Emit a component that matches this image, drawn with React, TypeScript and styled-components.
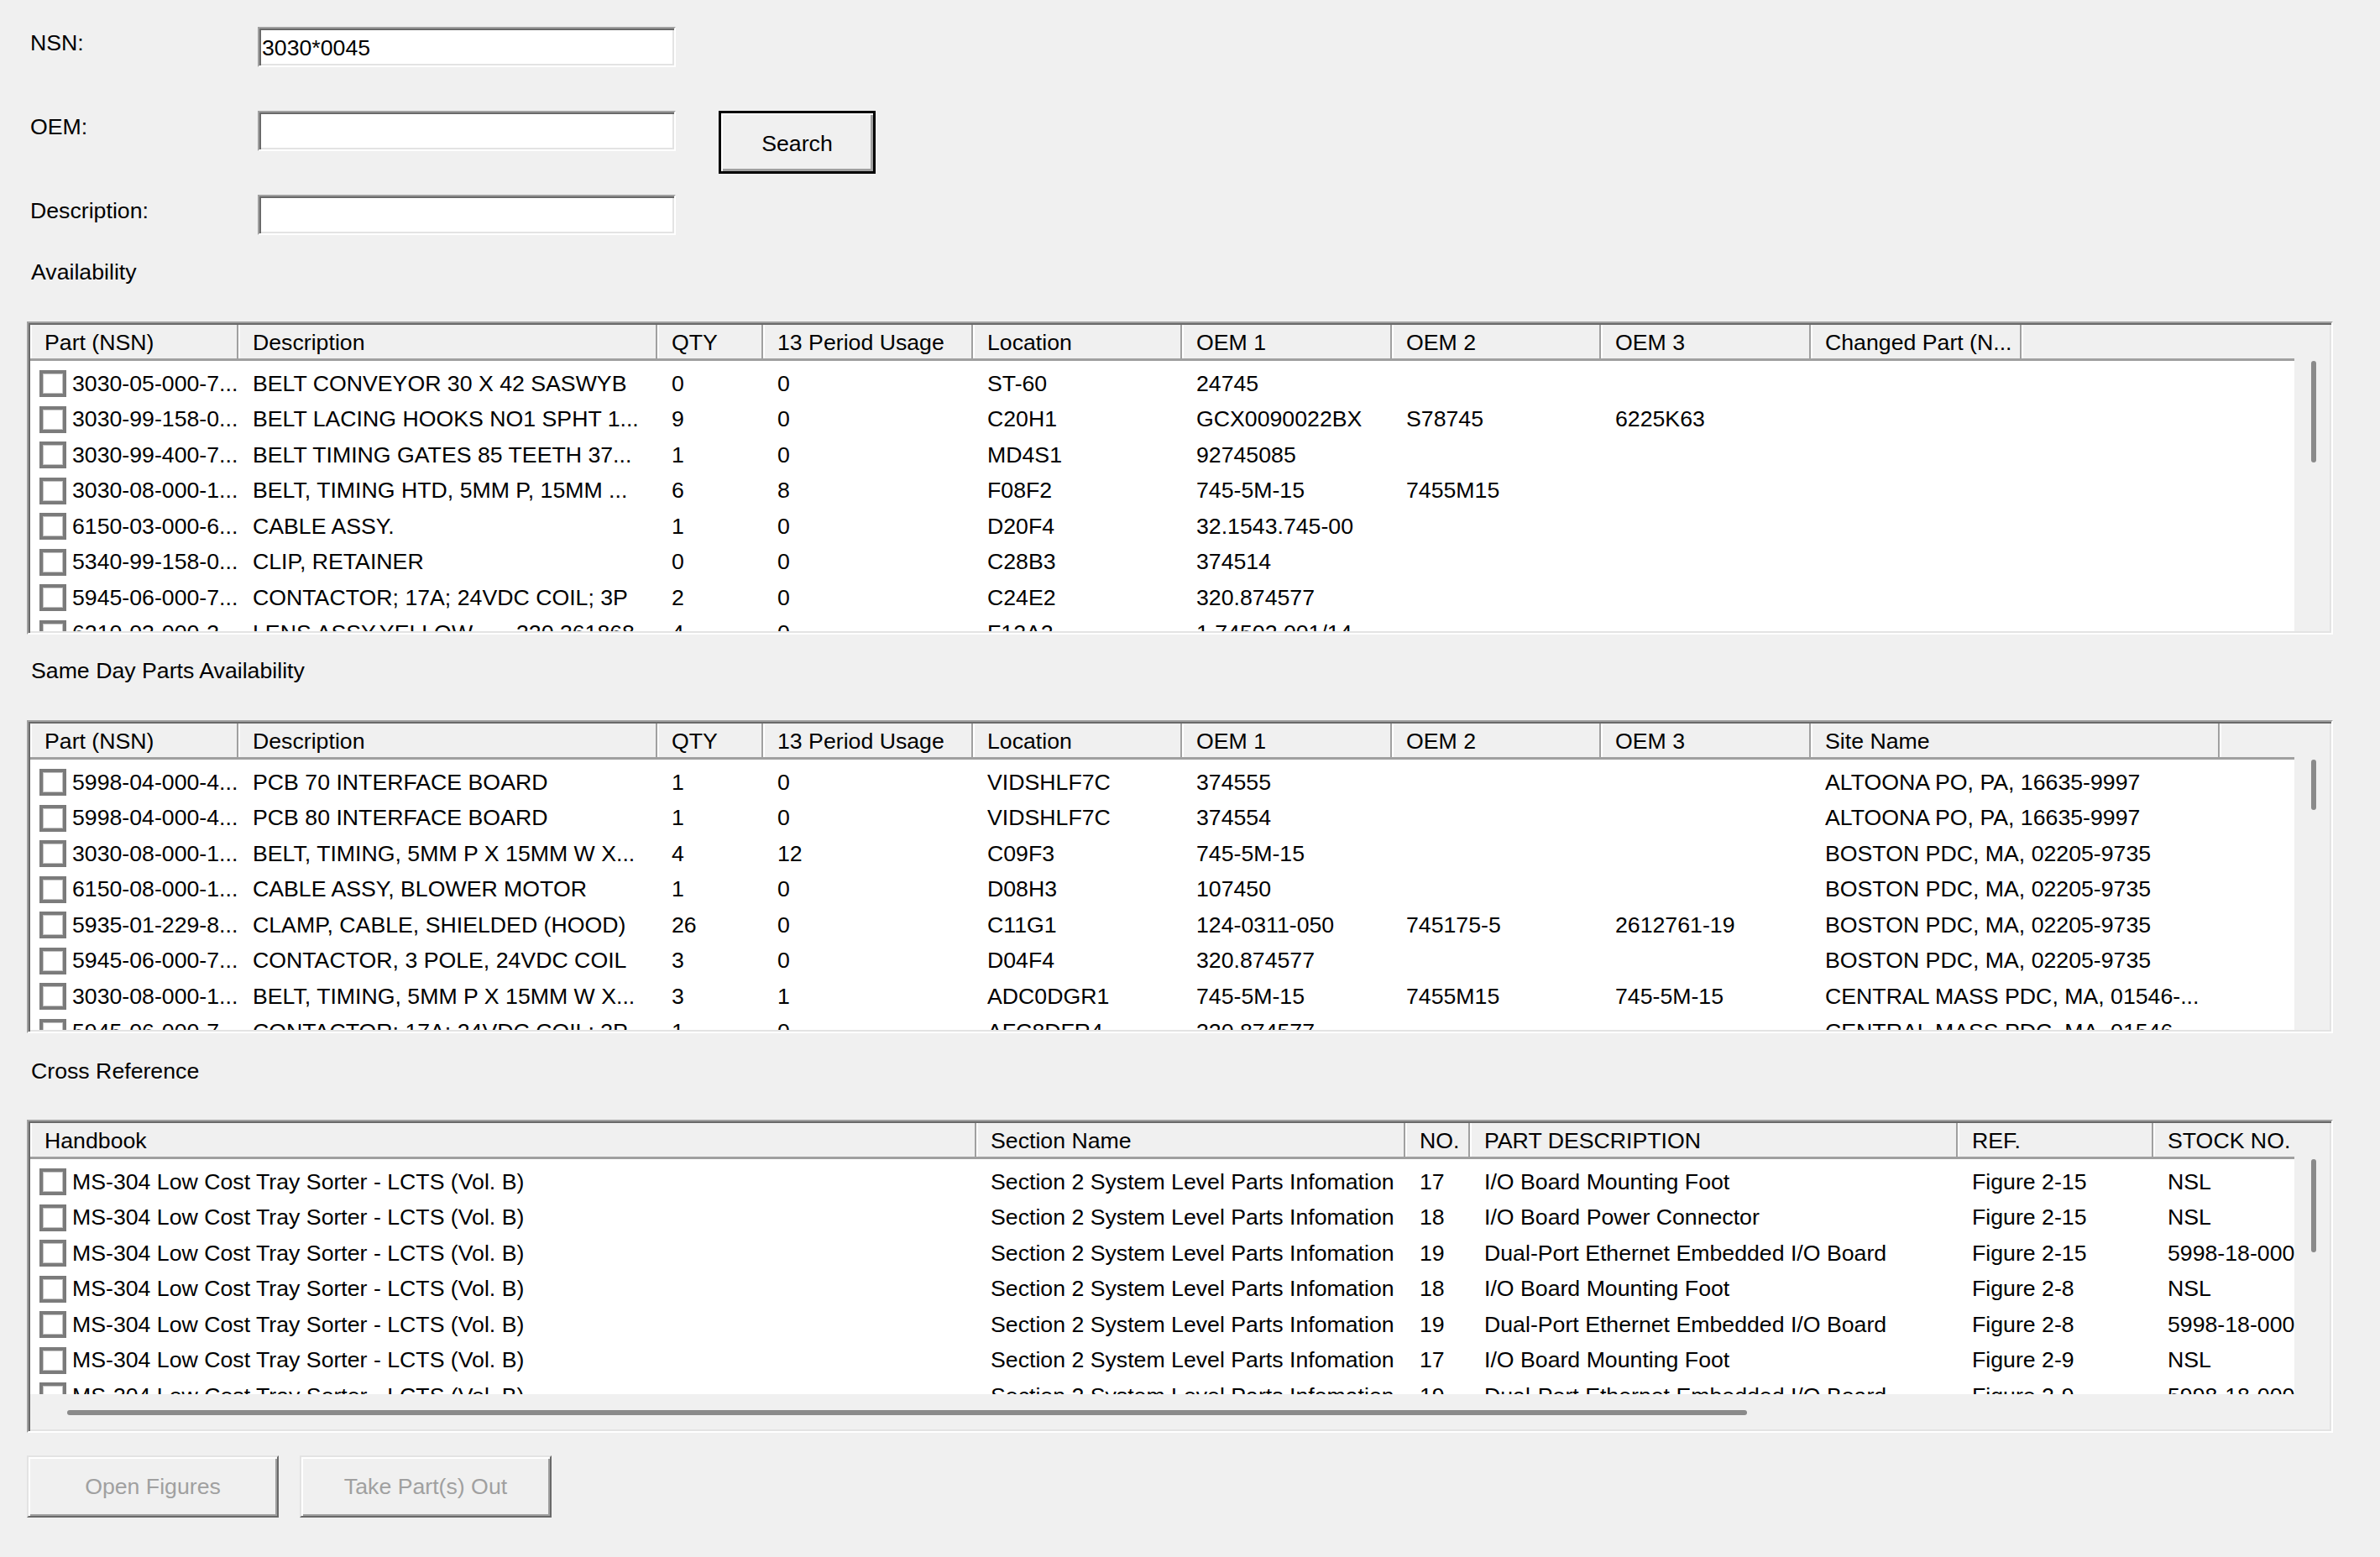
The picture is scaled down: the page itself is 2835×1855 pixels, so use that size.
import React from 'react'
import styled, { createGlobalStyle } from 'styled-components'

const GlobalStyle = createGlobalStyle`
  html, body {
    margin: 0;
    padding: 0;
  }
  body {
    background: #f0f0f0;
    font-family: 'Liberation Sans', Arial, sans-serif;
    font-size: 26.7px;
    color: #000;
  }
`

type Column = { title: string; width: number }

const partColumns: Column[] = [
  { title: 'Part (NSN)', width: 248 },
  { title: 'Description', width: 499 },
  { title: 'QTY', width: 126 },
  { title: '13 Period Usage', width: 250 },
  { title: 'Location', width: 249 },
  { title: 'OEM 1', width: 250 },
  { title: 'OEM 2', width: 249 },
  { title: 'OEM 3', width: 250 },
]

const availabilityColumns: Column[] = [...partColumns, { title: 'Changed Part (N...', width: 251 }]
const sameDayColumns: Column[] = [...partColumns, { title: 'Site Name', width: 487 }]

const crossColumns: Column[] = [
  { title: 'Handbook', width: 1127 },
  { title: 'Section Name', width: 511 },
  { title: 'NO.', width: 77 },
  { title: 'PART DESCRIPTION', width: 581 },
  { title: 'REF.', width: 233 },
  { title: 'STOCK NO.', width: 300 },
]

const availabilityRows = [
  ['3030-05-000-7...', 'BELT CONVEYOR 30 X 42 SASWYB', '0', '0', 'ST-60', '24745'],
  ['3030-99-158-0...', 'BELT LACING HOOKS NO1 SPHT 1...', '9', '0', 'C20H1', 'GCX0090022BX', 'S78745', '6225K63'],
  ['3030-99-400-7...', 'BELT TIMING GATES 85 TEETH 37...', '1', '0', 'MD4S1', '92745085'],
  ['3030-08-000-1...', 'BELT, TIMING HTD, 5MM P, 15MM ...', '6', '8', 'F08F2', '745-5M-15', '7455M15'],
  ['6150-03-000-6...', 'CABLE ASSY.', '1', '0', 'D20F4', '32.1543.745-00'],
  ['5340-99-158-0...', 'CLIP, RETAINER', '0', '0', 'C28B3', '374514'],
  ['5945-06-000-7...', 'CONTACTOR; 17A; 24VDC COIL; 3P', '2', '0', 'C24E2', '320.874577'],
  ['6210-03-000-3...', 'LENS ASSY,YELLOW       320.361868', '4', '0', 'F12A2', '1.74502.001/14'],
]

const sameDayRows = [
  ['5998-04-000-4...', 'PCB 70 INTERFACE BOARD', '1', '0', 'VIDSHLF7C', '374555', '', '', 'ALTOONA PO, PA, 16635-9997'],
  ['5998-04-000-4...', 'PCB 80 INTERFACE BOARD', '1', '0', 'VIDSHLF7C', '374554', '', '', 'ALTOONA PO, PA, 16635-9997'],
  ['3030-08-000-1...', 'BELT, TIMING, 5MM P X 15MM W X...', '4', '12', 'C09F3', '745-5M-15', '', '', 'BOSTON PDC, MA, 02205-9735'],
  ['6150-08-000-1...', 'CABLE ASSY, BLOWER MOTOR', '1', '0', 'D08H3', '107450', '', '', 'BOSTON PDC, MA, 02205-9735'],
  ['5935-01-229-8...', 'CLAMP, CABLE, SHIELDED (HOOD)', '26', '0', 'C11G1', '124-0311-050', '745175-5', '2612761-19', 'BOSTON PDC, MA, 02205-9735'],
  ['5945-06-000-7...', 'CONTACTOR, 3 POLE, 24VDC COIL', '3', '0', 'D04F4', '320.874577', '', '', 'BOSTON PDC, MA, 02205-9735'],
  ['3030-08-000-1...', 'BELT, TIMING, 5MM P X 15MM W X...', '3', '1', 'ADC0DGR1', '745-5M-15', '7455M15', '745-5M-15', 'CENTRAL MASS PDC, MA, 01546-...'],
  ['5945-06-000-7...', 'CONTACTOR; 17A; 24VDC COIL; 3P', '1', '0', 'AFC8DFR4', '320.874577', '', '', 'CENTRAL MASS PDC, MA, 01546-...'],
]

const handbook = 'MS-304 Low Cost Tray Sorter - LCTS (Vol. B)'
const section = 'Section 2 System Level Parts Infomation'

const crossRows = [
  [handbook, section, '17', 'I/O Board Mounting Foot', 'Figure 2-15', 'NSL'],
  [handbook, section, '18', 'I/O Board Power Connector', 'Figure 2-15', 'NSL'],
  [handbook, section, '19', 'Dual-Port Ethernet Embedded I/O Board', 'Figure 2-15', '5998-18-000-'],
  [handbook, section, '18', 'I/O Board Mounting Foot', 'Figure 2-8', 'NSL'],
  [handbook, section, '19', 'Dual-Port Ethernet Embedded I/O Board', 'Figure 2-8', '5998-18-000-'],
  [handbook, section, '17', 'I/O Board Mounting Foot', 'Figure 2-9', 'NSL'],
  [handbook, section, '19', 'Dual-Port Ethernet Embedded I/O Board', 'Figure 2-9', '5998-18-000-'],
]

type ListProps = {
  columns: Column[]
  rows: string[][]
  thumbHeight: number
  hThumb?: { left: number; width: number }
}

const ListTable = ({ columns, rows, thumbHeight, hThumb }: ListProps) => {
  const template = columns.map((c) => `${c.width}px`).join(' ') + ' 1fr'
  return (
    <Frame>
      <ListPane>
        <ListArea>
          <HeaderRow $template={template}>
            {columns.map((c) => (
              <HeaderCell key={c.title}>{c.title}</HeaderCell>
            ))}
            <HeaderFiller />
          </HeaderRow>
          <ListBody>
            {rows.map((row, i) => (
              <ItemRow key={i} $template={template}>
                <CheckCell>
                  <CheckBox />
                  {row[0]}
                </CheckCell>
                {columns.slice(1).map((c, j) => (
                  <ItemCell key={c.title}>{row[j + 1] ?? ''}</ItemCell>
                ))}
              </ItemRow>
            ))}
          </ListBody>
        </ListArea>
        <VScroll>
          <VThumb $h={thumbHeight} />
        </VScroll>
      </ListPane>
      {hThumb && (
        <HScrollRow>
          <HTrack>
            <HThumb style={{ marginLeft: hThumb.left, width: hThumb.width }} />
          </HTrack>
          <ScrollCorner />
        </HScrollRow>
      )}
    </Frame>
  )
}

export default function App() {
  return (
    <>
      <GlobalStyle />
      <Page>
        <SearchForm>
          <FieldLabel $row={1}>NSN:</FieldLabel>
          <TextBox $row={1} defaultValue="3030*0045" />
          <FieldLabel $row={2}>OEM:</FieldLabel>
          <TextBox $row={2} defaultValue="" />
          <SearchButton type="button">Search</SearchButton>
          <FieldLabel $row={3}>Description:</FieldLabel>
          <TextBox $row={3} defaultValue="" />
        </SearchForm>

        <SectionLabel $top={28}>Availability</SectionLabel>
        <FrameSlot $top={45}>
          <ListTable columns={availabilityColumns} rows={availabilityRows} thumbHeight={121} />
        </FrameSlot>

        <SectionLabel $top={27}>Same Day Parts Availability</SectionLabel>
        <FrameSlot $top={45}>
          <ListTable columns={sameDayColumns} rows={sameDayRows} thumbHeight={60} />
        </FrameSlot>

        <SectionLabel $top={29}>Cross Reference</SectionLabel>
        <FrameSlot $top={44}>
          <ListTable
            columns={crossColumns}
            rows={crossRows}
            thumbHeight={111}
            hThumb={{ left: 44, width: 2001 }}
          />
        </FrameSlot>

        <ButtonBar>
          <ActionButton type="button" disabled>
            Open Figures
          </ActionButton>
          <ActionButton type="button" disabled>
            Take Part(s) Out
          </ActionButton>
        </ButtonBar>
      </Page>
    </>
  )
}

const Page = styled.div`
  width: 2835px;
  min-height: 1855px;
  box-sizing: border-box;
  padding: 32px 0 0 32px;
  display: flex;
  flex-direction: column;
  align-items: flex-start;
`

const SearchForm = styled.div`
  display: grid;
  grid-template-columns: 275px 498px 51px 187px;
  grid-template-rows: repeat(3, 48px);
  row-gap: 52px;
`

const FieldLabel = styled.div<{ $row: number }>`
  grid-column: 1;
  grid-row: ${(p) => p.$row};
  padding: 4px 0 0 4px;
  line-height: 30px;
  white-space: nowrap;
`

const TextBox = styled.input<{ $row: number }>`
  grid-column: 2;
  grid-row: ${(p) => p.$row};
  box-sizing: border-box;
  width: 498px;
  height: 48px;
  margin: 0;
  padding: 2px 3px 0;
  border: 2px solid;
  border-color: #a0a0a0 #ffffff #ffffff #a0a0a0;
  box-shadow: inset 2px 2px 0 #696969, inset -2px -2px 0 #e3e3e3;
  background: #fff;
  font-family: 'Liberation Sans', Arial, sans-serif;
  font-size: 26.7px;
  color: #000;
  outline: none;
`

const SearchButton = styled.button`
  grid-column: 4;
  grid-row: 2 / span 2;
  align-self: start;
  box-sizing: border-box;
  width: 187px;
  height: 75px;
  margin: 0;
  padding: 3px 0 0;
  border: 3px solid #000;
  box-shadow: inset 2px 2px 0 #ffffff, inset -3px -3px 0 #a0a0a0;
  background: #f0f0f0;
  font-family: 'Liberation Sans', Arial, sans-serif;
  font-size: 26.7px;
  color: #000;
`

const SectionLabel = styled.div<{ $top: number }>`
  margin-top: ${(p) => p.$top}px;
  padding: 2px 0 0 5px;
  line-height: 28px;
  white-space: nowrap;
`

const FrameSlot = styled.div<{ $top: number }>`
  margin-top: ${(p) => p.$top}px;
`

const Frame = styled.div`
  box-sizing: border-box;
  width: 2747px;
  height: 373px;
  padding: 2px;
  border: 2px solid;
  border-color: #a0a0a0 #ffffff #ffffff #a0a0a0;
  box-shadow: inset 2px 2px 0 #696969, inset -2px -2px 0 #e3e3e3;
  display: flex;
  flex-direction: column;
`

const ListPane = styled.div`
  flex: 1;
  min-height: 0;
  display: flex;
`

const ListArea = styled.div`
  flex: 1;
  min-width: 0;
  display: flex;
  flex-direction: column;
  overflow: hidden;
  background: #fff;
`

const HeaderRow = styled.div<{ $template: string }>`
  display: grid;
  grid-template-columns: ${(p) => p.$template};
  flex: 0 0 43px;
  box-sizing: border-box;
  border-bottom: 3px solid #a0a0a0;
  background: #f0f0f0;
`

const HeaderCell = styled.div`
  box-sizing: border-box;
  display: flex;
  align-items: center;
  padding: 3px 0 0 15px;
  border-left: 2px solid #ffffff;
  border-right: 2px solid #a0a0a0;
  white-space: nowrap;
  overflow: hidden;
`

const HeaderFiller = styled.div`
  border-left: 2px solid #ffffff;
`

const ListBody = styled.div`
  flex: 1;
  min-height: 0;
  padding-top: 6px;
  overflow: hidden;
  background: #fff;
`

const ItemRow = styled.div<{ $template: string }>`
  display: grid;
  grid-template-columns: ${(p) => p.$template};
  height: 42.5px;
  align-items: center;
`

const ItemCell = styled.div`
  padding-left: 17px;
  white-space: pre;
  overflow: hidden;
`

const CheckCell = styled.div`
  display: flex;
  align-items: center;
  gap: 7px;
  padding-left: 11px;
  white-space: nowrap;
  overflow: hidden;
`

const CheckBox = styled.span`
  flex: 0 0 auto;
  box-sizing: border-box;
  width: 32px;
  height: 32px;
  border: 4px solid #7b7b7b;
  box-shadow: inset 0 0 0 1px #c4c4c4;
  background: #fff;
`

const VScroll = styled.div`
  flex: 0 0 42px;
  box-sizing: border-box;
  padding: 43px 0 0 20px;
  background: #f0f0f0;
`

const VThumb = styled.div<{ $h: number }>`
  width: 6px;
  height: ${(p) => p.$h}px;
  border-radius: 3px;
  background: #8a8a8a;
`

const HScrollRow = styled.div`
  flex: 0 0 42px;
  display: flex;
  background: #f0f0f0;
`

const HTrack = styled.div`
  flex: 1;
  padding-top: 19px;
`

const HThumb = styled.div`
  height: 6px;
  border-radius: 3px;
  background: #8a8a8a;
`

const ScrollCorner = styled.div`
  flex: 0 0 42px;
`

const ButtonBar = styled.div`
  margin-top: 27px;
  display: flex;
  gap: 25px;
`

const ActionButton = styled.button`
  box-sizing: border-box;
  width: 300px;
  height: 74px;
  margin: 0;
  padding: 0;
  border: 2px solid;
  border-color: #e3e3e3 #696969 #696969 #e3e3e3;
  box-shadow: inset 2px 2px 0 #ffffff, inset -2px -2px 0 #a0a0a0;
  background: #f0f0f0;
  font-family: 'Liberation Sans', Arial, sans-serif;
  font-size: 26.7px;
  color: #a0a0a0;
`
